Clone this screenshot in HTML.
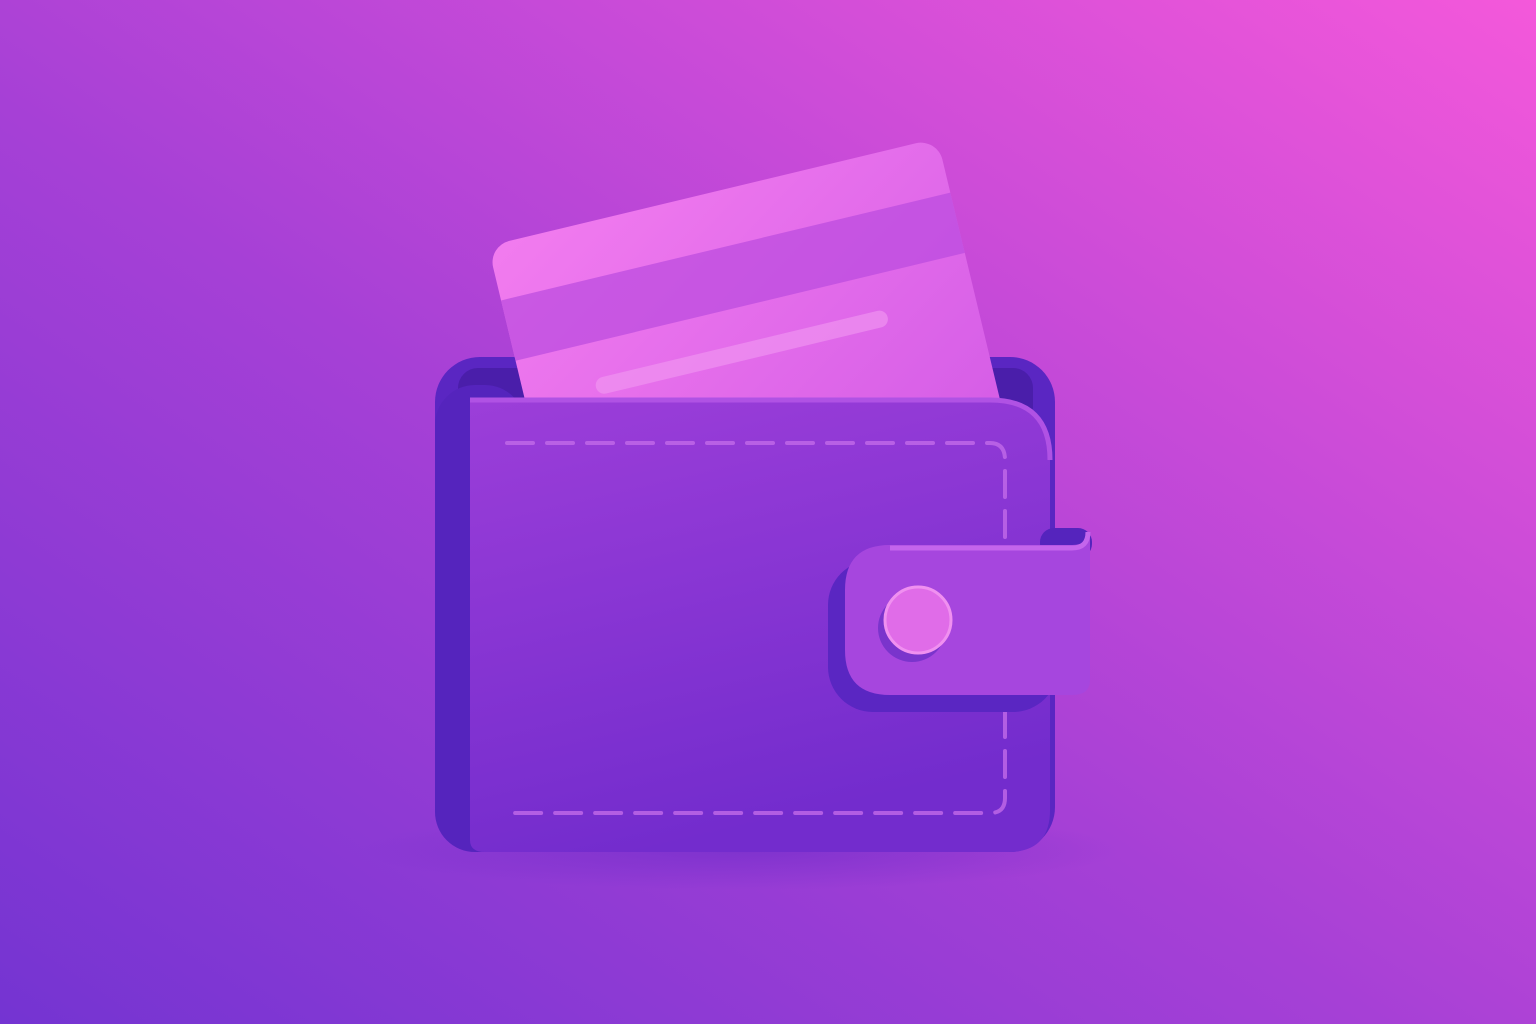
<!DOCTYPE html>
<html><head><meta charset="utf-8"><style>html,body{margin:0;padding:0;width:1536px;height:1024px;overflow:hidden}</style></head>
<body>
<svg width="1536" height="1024" viewBox="0 0 1536 1024" xmlns="http://www.w3.org/2000/svg">
<defs>
<linearGradient id="bg" x1="0" y1="1" x2="1" y2="0">
<stop offset="0" stop-color="#7434d2"/><stop offset="0.45" stop-color="#a640d6"/><stop offset="1" stop-color="#f458da"/>
</linearGradient>
<linearGradient id="card" x1="0" y1="0" x2="1" y2="1">
<stop offset="0" stop-color="#f27cef"/><stop offset="1" stop-color="#d45ce6"/>
</linearGradient>
<linearGradient id="front" x1="0" y1="0" x2="0.3" y2="1">
<stop offset="0" stop-color="#9c3ed9"/><stop offset="1" stop-color="#732ccd"/>
</linearGradient>
<radialGradient id="sh" cx="0.5" cy="0.5" r="0.5">
<stop offset="0" stop-color="#6a2ac8" stop-opacity="0.55"/><stop offset="1" stop-color="#6a2ac8" stop-opacity="0"/>
</radialGradient>
</defs>
<rect width="1536" height="1024" fill="url(#bg)"/>
<ellipse cx="740" cy="850" rx="380" ry="40" fill="url(#sh)"/>
<rect x="435" y="357" width="620" height="495" rx="45" fill="#5a26c2"/>
<rect x="458" y="368" width="575" height="60" rx="20" fill="#4a1eaa"/>
<g transform="translate(488,246) rotate(-13.5)">
<rect x="0" y="0" width="462" height="300" rx="22" fill="url(#card)"/>
<rect x="0" y="56" width="462" height="62" fill="#b94ade" opacity="0.7"/>
<rect x="72" y="154" width="300" height="17" rx="8.5" fill="#f29af2" opacity="0.6"/>
</g>
<rect x="435" y="385" width="90" height="467" rx="40" fill="#5524bd"/>
<path d="M470 400 H990 Q1050 400 1050 460 V810 Q1050 852 1008 852 H485 Q470 852 470 840 Z" fill="url(#front)"/>
<path d="M470 400 H990 Q1050 400 1050 460" fill="none" stroke="#b052e4" stroke-width="5"/>
<path d="M507 443 H990 Q1005 443 1005 460 V798 Q1005 813 990 813 H507" fill="none" stroke="#c26ae8" stroke-width="4" stroke-dasharray="26 14" stroke-linecap="round" opacity="0.8"/>
<rect x="828" y="560" width="230" height="152" rx="45" fill="#5a26c2"/>
<rect x="1040" y="528" width="52" height="30" rx="14" fill="#5524bd"/>
<path d="M890 545 H1072 Q1090 545 1090 530 V680 Q1090 695 1072 695 H890 Q845 695 845 650 V590 Q845 545 890 545 Z" fill="#a646de"/>
<path d="M890 548 H1072 Q1088 548 1088 532" fill="none" stroke="#c465ec" stroke-width="5"/>
<circle cx="912" cy="628" r="34" fill="#7a34cc"/>
<circle cx="918" cy="620" r="33" fill="#e06ce8"/>
<circle cx="918" cy="620" r="33" fill="none" stroke="#f090f0" stroke-width="3"/>
</svg>
</body></html>
